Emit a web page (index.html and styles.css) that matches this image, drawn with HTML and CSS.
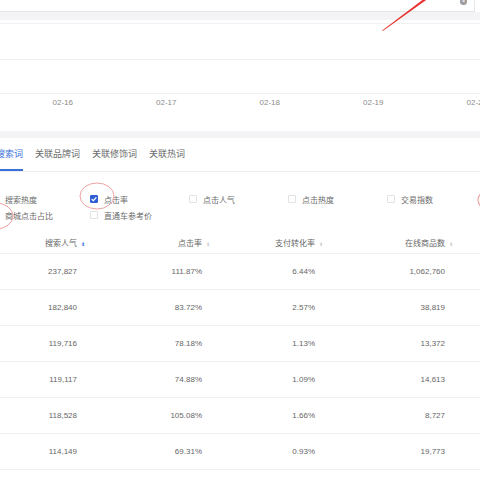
FILE: index.html
```html
<!DOCTYPE html>
<html lang="zh-CN">
<head>
<meta charset="utf-8">
<link rel="stylesheet" href="styles.css">
</head>
<body>
<div class="page">
  <div class="topbox"><span class="close">×</span></div>
  <div class="band band-top"></div>
  <div class="chart">
    <div class="gl gl-a"></div>
    <div class="gl gl-b"></div>
    <div class="gl gl-c"></div>
    <div class="axis">
      <span>02-16</span><span>02-17</span><span>02-18</span><span>02-19</span><span>02-20</span>
    </div>
  </div>
  <div class="band band-mid"></div>
  <div class="tabs">
    <span class="tab active">搜索词</span>
    <span class="tab">关联品牌词</span>
    <span class="tab">关联修饰词</span>
    <span class="tab">关联热词</span>
  </div>
  <div class="filters">
    <label class="opt"><span class="cb"></span>搜索热度</label>
    <label class="opt"><span class="cb on"><svg viewBox="0 0 8 8"><path d="M1.6 4.1 L3.3 5.7 L6.4 2.4" fill="none" stroke="#fff" stroke-width="1.3"/></svg></span>点击率</label>
    <label class="opt"><span class="cb"></span>点击人气</label>
    <label class="opt"><span class="cb"></span>点击热度</label>
    <label class="opt"><span class="cb"></span>交易指数</label>
    <label class="opt"><span class="cb blue"></span>商城点击占比</label>
    <label class="opt"><span class="cb"></span>直通车参考价</label>
  </div>
  <div class="table">
    <div class="tr th">
      <div class="td">搜索人气<span class="sort active">⬍</span></div>
      <div class="td">点击率<span class="sort">⬍</span></div>
      <div class="td">支付转化率<span class="sort">⬍</span></div>
      <div class="td">在线商品数<span class="sort">⬍</span></div>
      <div class="td"></div>
    </div>
    <div class="tr"><div class="td">237,827</div><div class="td">111.87%</div><div class="td">6.44%</div><div class="td">1,062,760</div><div class="td"></div></div>
    <div class="tr"><div class="td">182,840</div><div class="td">83.72%</div><div class="td">2.57%</div><div class="td">38,819</div><div class="td"></div></div>
    <div class="tr"><div class="td">119,716</div><div class="td">78.18%</div><div class="td">1.13%</div><div class="td">13,372</div><div class="td"></div></div>
    <div class="tr"><div class="td">119,117</div><div class="td">74.88%</div><div class="td">1.09%</div><div class="td">14,613</div><div class="td"></div></div>
    <div class="tr"><div class="td">118,528</div><div class="td">105.08%</div><div class="td">1.66%</div><div class="td">8,727</div><div class="td"></div></div>
    <div class="tr"><div class="td">114,149</div><div class="td">69.31%</div><div class="td">0.93%</div><div class="td">19,773</div><div class="td"></div></div>
  </div>
  <svg class="marks" viewBox="0 0 480 480" width="480" height="480">
    <polygon points="381.5,31 383.5,30.5 429,-2 425,-2" fill="#e8322f"/>
    <ellipse cx="97" cy="196" rx="17" ry="13" fill="none" stroke="#eda3a3" stroke-width="1"/>
    <ellipse cx="-4" cy="216" rx="17" ry="13" fill="none" stroke="#eda3a3" stroke-width="1"/>
    <ellipse cx="496" cy="200" rx="18" ry="12" fill="none" stroke="#eda3a3" stroke-width="1.2"/>
  </svg>
</div>
</body>
</html>
```
FILE: styles.css
```css
* { box-sizing: border-box; }
html, body { margin: 0; padding: 0; background: #fff; }
body {
  width: 480px; height: 480px; overflow: hidden;
  font-family: "Liberation Sans", "Noto Sans CJK SC", sans-serif;
  color: #666;
}
.page { position: relative; width: 480px; height: 480px; overflow: hidden; }

.topbox {
  position: relative;
  height: 12px; width: 475px;
  border-bottom: 1px solid #e6e6e6;
  border-right: 1px solid #e6e6e6;
  background: #fff;
}
.close {
  position: absolute; right: 7px; top: -2px;
  width: 7px; height: 7px; border-radius: 50%;
  background: #9a9a9a; color: #fff;
  font-size: 6px; line-height: 7px; text-align: center;
}
.band { background: #f4f4f6; }
.band-top { height: 8px; }
.band-mid { height: 7px; }

.chart { height: 111px; background: #fff; }
.gl { border-bottom: 1px solid #f1f1f1; }
.gl-a { height: 4px; }
.gl-b { height: 36px; }
.gl-c { height: 34px; }
.axis {
  display: flex; padding-left: 11px; padding-top: 4px;
  font-size: 8px; line-height: 10px; color: #8c8c8c;
}
.axis span { flex: 0 0 103.5px; text-align: center; }

.tabs {
  display: flex; gap: 12px; margin-left: -4px;
  height: 34px; align-items: flex-end;
  border-bottom: 1px solid #ececec;
  font-size: 9px; color: #6a6a6a;
}
.tab { line-height: 12px; padding-bottom: 9px; border-bottom: 2px solid transparent; }
.tab.active { color: #3b6fd9; border-bottom-color: #3b6fd9; }

.filters {
  display: grid; grid-template-columns: repeat(5, 99px);
  grid-auto-rows: 16px;
  margin-left: -9px; padding-top: 19px;
  font-size: 8px; color: #6a6a6a;
}
.opt { display: flex; align-items: center; gap: 6px; white-space: nowrap; }
.cb {
  width: 8px; height: 8px; border: 1px solid #e2e2e2; border-radius: 1px; background: #fff;
  flex: 0 0 8px; display: block;
}
.cb svg { display: block; width: 8px; height: 8px; margin: -1px; }
.cb.on { background: #2f5fd3; border-color: #2f5fd3; }
.cb.blue { border-color: #8fb0e8; }

.table { margin-top: 9px; }
.tr {
  display: grid; grid-template-columns: 77px 125px 113px 130px 35px;
  height: 36px; align-items: center;
  border-bottom: 1px solid #f0f0f0;
  font-size: 8px; color: #666;
}
.tr.th { height: 22px; color: #666; }
.td { text-align: right; white-space: nowrap; }
.sort { display: inline-block; width: 4px; margin-left: 4px; margin-right: -8px; font-size: 5px; color: #ccc; }
.sort.active { color: #3b6fd9; }

.marks { position: absolute; left: 0; top: 0; pointer-events: none; overflow: visible; }
```
